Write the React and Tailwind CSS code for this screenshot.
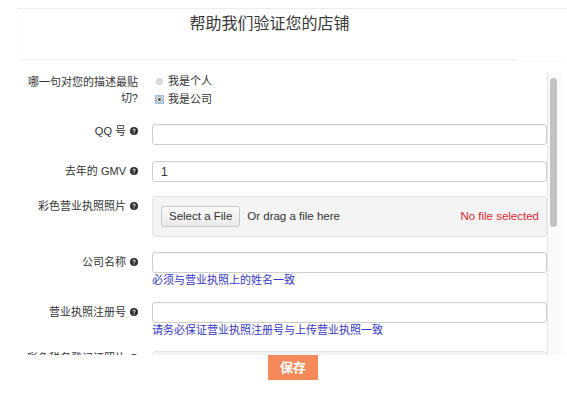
import React from 'react'

const FONT = { fontFamily: '"Liberation Sans", "Noto Sans CJK SC", sans-serif' }

function InfoIcon() {
  return (
    <svg viewBox="0 0 8 8" className="ml-[4px] inline-block h-[8px] w-[8px] align-[0px]" aria-hidden="true">
      <circle cx="4" cy="4" r="4" fill="#2f2f2f" />
      <path d="M2.9 3.1a1.15 1.15 0 1 1 1.6 1.05c-.35.17-.5.35-.5.75" fill="none" stroke="#fff" strokeWidth="0.9" strokeLinecap="round" />
      <circle cx="4" cy="6.1" r="0.5" fill="#fff" />
    </svg>
  )
}

function Label({ children, icon = true, className = '' }) {
  return (
    <div className={`ml-[22px] w-[116px] shrink-0 text-right text-[11px] text-[#333] ${className}`}>
      {children}
      {icon ? <InfoIcon /> : null}
    </div>
  )
}

function TextInput({ value = '' }) {
  return (
    <div className="flex h-[21px] items-center rounded-[3px] border border-[#cfcfcf] bg-white px-[8px] text-[12px] text-[#333] shadow-[inset_0_1px_1px_rgba(0,0,0,0.04)]">
      {value}
    </div>
  )
}

function FileDrop() {
  return (
    <div className="flex h-[41px] items-center rounded-[3px] border border-[#e6e6e6] bg-[#f4f4f4] pl-[8px] pr-[7px] text-[11.5px]">
      <span className="flex h-[21px] items-center rounded-[3px] border border-[#c8c8c8] bg-gradient-to-b from-[#fafafa] to-[#e9e9e9] px-[7px] text-[#333]">
        Select a File
      </span>
      <span className="ml-[7px] text-[#333]">Or drag a file here</span>
      <span className="ml-auto text-[#e0262f]">No file selected</span>
    </div>
  )
}

function Row({ label, className = '', labelClass = 'leading-[21px]', children }) {
  return (
    <div className={`flex items-start ${className}`}>
      <Label className={labelClass}>{label}</Label>
      <div className="ml-[14px] flex-1">{children}</div>
    </div>
  )
}

export default function App() {
  return (
    <div className="h-[395px] w-[567px] overflow-hidden bg-white" style={FONT}>
      <div className="ml-[17px] mt-[8px] border-t border-[#ececec] shadow-[0_1px_2px_rgba(0,0,0,0.03)]">
        <div className="ml-[5px] h-[51px] w-[495px] border-b border-[#efefef] pt-[4px] text-center text-[16px] leading-[22px] text-[#383838]">
          帮助我们验证您的店铺
        </div>
      </div>

      <div className="flex h-[295px]">
        <div className="flex-1 overflow-hidden pt-[12px]">
          <div className="flex items-start">
            <Label icon={false} className="pt-[2px] leading-[16px]">
              哪一句对您的描述最贴切?
            </Label>
            <div className="ml-[14px] pl-[4px] text-[11px] leading-[18px] text-[#333]">
              <div className="flex items-center">
                <span className="h-[7px] w-[7px] rounded-full border border-[#c9c9c9] bg-[#dedede]" />
                <span className="ml-[5px]">我是个人</span>
              </div>
              <div className="-ml-[1px] flex items-center">
                <span className="flex h-[9px] w-[9px] items-center justify-center border border-[#9dbce6] bg-[#d2e2f7]">
                  <span className="flex h-[7px] w-[7px] items-center justify-center rounded-full border border-[#9a9a9a] bg-white">
                    <span className="h-[3px] w-[3px] rounded-full bg-[#444]" />
                  </span>
                </span>
                <span className="ml-[4px]">我是公司</span>
              </div>
            </div>
          </div>

          <Row label="QQ 号" className="mt-[16px]" labelClass="leading-[21px] -mt-[3px]">
            <TextInput />
          </Row>

          <Row label="去年的 GMV" className="mt-[16px]">
            <TextInput value="1" />
          </Row>

          <Row label="彩色营业执照照片" className="mt-[14px]">
            <FileDrop />
          </Row>

          <Row label="公司名称" className="mt-[15px]">
            <TextInput />
            <p className="text-[11px] leading-[15px] text-[#3535c8]">必须与营业执照上的姓名一致</p>
          </Row>

          <Row label="营业执照注册号" className="mt-[14px]">
            <TextInput />
            <p className="text-[11px] leading-[15px] text-[#3535c8]">请务必保证营业执照注册号与上传营业执照一致</p>
          </Row>

          <Row label="彩色税务登记证照片" className="mt-[13px]" labelClass="leading-[14px]">
            <div className="h-[41px] rounded-[3px] border border-[#e6e6e6] bg-[#f4f4f4]" />
          </Row>
        </div>

        <div className="mt-[13px] w-[16px] border-l border-[#e6e6e6] bg-[#fafafa] pl-[2px] pt-[5px]">
          <div className="h-[149px] w-[7px] rounded-full bg-[#c2c2c2]" />
        </div>
        <div className="w-[4px]" />
      </div>

      <div className="pl-[268px]">
        <button
          type="button"
          className="relative -mt-[3px] h-[25px] w-[50px] bg-[#f5895a] text-[13px] font-bold text-white"
        >
          保存
        </button>
      </div>
    </div>
  )
}
